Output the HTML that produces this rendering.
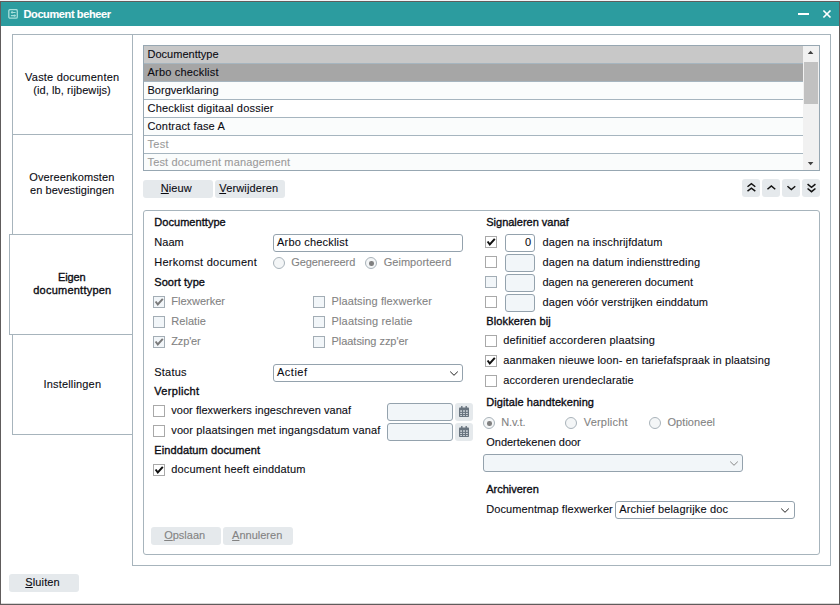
<!DOCTYPE html>
<html lang="nl"><head><meta charset="utf-8"><title>Document beheer</title>
<style>
html,body{margin:0;padding:0;background:#fff}
body{width:840px;height:605px;position:relative;overflow:hidden;font-family:"Liberation Sans",sans-serif;font-size:11px;color:#0b0b12}
body>*{position:absolute}
.win{box-sizing:border-box;border:1px solid #605c5c;border-top:none;background:#fff;box-shadow:inset 0 1px 0 #f4f4f6, inset 0 2px 0 #605c5c, inset 0 -1px 0 #d8d6d6}
.title{background:#2c9c9f;box-shadow:inset 0 1px 0 #29a2a3}
.t{line-height:14px;white-space:pre;font-size:11px;-webkit-text-stroke:0.1px currentColor}
.b{font-weight:normal;-webkit-text-stroke:0.34px currentColor}
.bb{font-weight:bold}
.w{color:#fff}
.g{color:#838383}
.g2{color:#9a9a9a}
u{text-decoration:underline;text-underline-offset:1px}
.btn{background:#e5e9ec;border-radius:3px}
.inp{box-sizing:border-box;border:1px solid #94a2ad;border-radius:3px;background:#fff}
.inp.dis{background:#f2f6f9}
.cb{box-sizing:border-box;border:1px solid #a9a9a9;background:#fff}
.cb.dis{background:#f2f6f9;border-color:#a3adb5}
.cb svg{position:absolute;left:-1px;top:-1px}
.rd{box-sizing:border-box;border:1px solid #a9b3ba;border-radius:50%;background:#f4f6f7}
.rd i{position:absolute;left:2.5px;top:2.5px;width:5px;height:5px;border-radius:45%;background:#808080}
</style></head>
<body>
<div class="win" style="left:0px;top:0px;width:840px;height:605px;"></div>
<div class="abs" style="left:0px;top:0px;width:840px;height:1px;background:#f4f4f6"></div>
<div class="title" style="left:1px;top:2px;width:838px;height:24px;"></div>
<svg class="abs" style="left:8px;top:9px" width="10" height="10" viewBox="0 0 10 10"><rect x="0.8" y="0.6" width="8.5" height="8.6" rx="1.3" fill="none" stroke="#a6dfdb" stroke-width="1.3"/><path d="M2.9 3.4 H7.6 M2.9 6.6 H7.6" stroke="#a6dfdb" stroke-width="1.05"/><circle cx="4.1" cy="3.4" r="1.15" fill="#a6dfdb"/><circle cx="6.6" cy="6.6" r="1.15" fill="#a6dfdb"/></svg>
<span id="t0" class="t bb w" style="left:23.5px;top:7px;letter-spacing:-0.387px;">Document beheer</span>
<div class="abs" style="left:798px;top:13px;width:10.5px;height:2px;background:#fff"></div>
<svg class="abs" style="left:822px;top:9px" width="10" height="10" viewBox="0 0 10 10"><path d="M1.4 1.5 L8.5 8.5 M8.5 1.5 L1.4 8.5" stroke="#fff" stroke-width="1.7" fill="none"/></svg>
<div class="abs" style="left:12px;top:34px;width:121px;height:401px;border:1px solid #a7b4bc;box-sizing:border-box"></div>
<div class="abs" style="left:12px;top:134px;width:121px;height:1px;background:#a7b4bc"></div>
<div class="abs" style="left:12px;top:334px;width:121px;height:1px;background:#a7b4bc"></div>
<div class="abs" style="left:132px;top:34px;width:699px;height:532px;border:1px solid #a7b4bc;box-sizing:border-box"></div>
<div class="abs" style="left:9px;top:234px;width:124px;height:101px;border:1px solid #a7b4bc;box-sizing:border-box;background:#fff"></div>
<span id="t1" class="t " style="left:25.099999999999994px;top:70px;letter-spacing:0.205px;">Vaste documenten</span>
<span id="t2" class="t " style="left:33.25px;top:83px;letter-spacing:0.094px;">(id, lb, rijbewijs)</span>
<span id="t3" class="t " style="left:29.25px;top:170px;letter-spacing:0.095px;">Overeenkomsten</span>
<span id="t4" class="t " style="left:29.974999999999994px;top:183px;letter-spacing:0.071px;">en bevestigingen</span>
<span id="t5" class="t b" style="left:58.0px;top:270px;letter-spacing:-0.160px;">Eigen</span>
<span id="t6" class="t b" style="left:33.25px;top:283px;letter-spacing:0.231px;">documenttypen</span>
<span id="t7" class="t " style="left:43.5px;top:377px;letter-spacing:0.168px;">Instellingen</span>
<div class="abs" style="left:143px;top:45px;width:677px;height:126px;border:1px solid #97a7b2;box-sizing:border-box;background:#fff"></div>
<div class="abs" style="left:144px;top:46px;width:659px;height:17px;background:#c8c8c8"></div>
<div class="abs" style="left:144px;top:63px;width:659px;height:1px;background:#a6b5bf"></div>
<span id="t8" class="t " style="left:147.5px;top:47px;letter-spacing:0.007px;">Documenttype</span>
<div class="abs" style="left:144px;top:64px;width:659px;height:17px;background:#a6a6a6"></div>
<div class="abs" style="left:144px;top:81px;width:659px;height:1px;background:#a6b5bf"></div>
<span id="t9" class="t " style="left:147.5px;top:65px;letter-spacing:0.194px;">Arbo checklist</span>
<div class="abs" style="left:144px;top:82px;width:659px;height:17px;background:#fafcfc"></div>
<div class="abs" style="left:144px;top:99px;width:659px;height:1px;background:#a6b5bf"></div>
<span id="t10" class="t " style="left:147.5px;top:83px;letter-spacing:0.013px;">Borgverklaring</span>
<div class="abs" style="left:144px;top:100px;width:659px;height:17px;background:#fff"></div>
<div class="abs" style="left:144px;top:117px;width:659px;height:1px;background:#a6b5bf"></div>
<span id="t11" class="t " style="left:147.5px;top:101px;letter-spacing:0.198px;">Checklist digitaal dossier</span>
<div class="abs" style="left:144px;top:118px;width:659px;height:17px;background:#fafcfc"></div>
<div class="abs" style="left:144px;top:135px;width:659px;height:1px;background:#a6b5bf"></div>
<span id="t12" class="t " style="left:147.5px;top:119px;letter-spacing:0.149px;">Contract fase A</span>
<div class="abs" style="left:144px;top:136px;width:659px;height:17px;background:#fff"></div>
<div class="abs" style="left:144px;top:153px;width:659px;height:1px;background:#a6b5bf"></div>
<span id="t13" class="t g2" style="left:147.5px;top:137px;letter-spacing:0.270px;">Test</span>
<div class="abs" style="left:144px;top:154px;width:659px;height:16px;background:#fafcfc"></div>
<span id="t14" class="t g2" style="left:147.5px;top:155px;letter-spacing:0.161px;">Test document management</span>
<div class="abs" style="left:803px;top:46px;width:16px;height:124px;background:#f1f1f1"></div>
<div class="abs" style="left:804px;top:62px;width:14px;height:42px;background:#c1c1c1"></div>
<svg class="abs" style="left:807px;top:50px" width="8" height="5" viewBox="0 0 8 5"><path d="M0.8 4.1 L3.6 0.7 L6.4 4.1 Z" fill="#404040"/></svg>
<svg class="abs" style="left:807px;top:161px" width="8" height="5" viewBox="0 0 8 5"><path d="M0.8 0.9 L3.6 4.3 L6.4 0.9 Z" fill="#404040"/></svg>
<div class="btn" style="left:143px;top:180px;width:70px;height:18px;"></div>
<span id="t15" class="t " style="left:160.75px;top:181px;letter-spacing:0.103px;"><u>N</u>ieuw</span>
<div class="btn" style="left:215px;top:180px;width:70px;height:18px;"></div>
<span id="t16" class="t " style="left:219.25px;top:181px;letter-spacing:0.150px;"><u>V</u>erwijderen</span>
<div class="btn" style="left:742px;top:179px;width:18px;height:18px;"><svg width="18" height="18" viewBox="0 0 18 18" style="position:absolute;left:0;top:0" fill="none" stroke="#111" stroke-width="1.5"><path d="M5.5 7.75 L9.4 4.75 L13.3 7.75 M5.5 12.1 L9.4 9.1 L13.3 12.1"/></svg></div>
<div class="btn" style="left:762px;top:179px;width:18px;height:18px;"><svg width="18" height="18" viewBox="0 0 18 18" style="position:absolute;left:0;top:0" fill="none" stroke="#111" stroke-width="1.5"><path d="M5.45 10.3 L9.35 6.9 L13.25 10.3"/></svg></div>
<div class="btn" style="left:782px;top:179px;width:18px;height:18px;"><svg width="18" height="18" viewBox="0 0 18 18" style="position:absolute;left:0;top:0" fill="none" stroke="#111" stroke-width="1.5"><path d="M5.45 7.2 L9.35 10.5 L13.25 7.2"/></svg></div>
<div class="btn" style="left:802px;top:179px;width:18px;height:18px;"><svg width="18" height="18" viewBox="0 0 18 18" style="position:absolute;left:0;top:0" fill="none" stroke="#111" stroke-width="1.5"><path d="M5.55 5.2 L9.5 8.4 L13.45 5.2 M5.55 9.5 L9.5 12.7 L13.45 9.5"/></svg></div>
<div class="abs" style="left:143px;top:210px;width:677px;height:345px;border:1px solid #a7b4bc;border-radius:3px;box-sizing:border-box"></div>
<span id="t17" class="t b" style="left:154.25px;top:215px;letter-spacing:0.051px;">Documenttype</span>
<span id="t18" class="t " style="left:154.25px;top:235px;letter-spacing:0.050px;">Naam</span>
<div class="inp" style="left:273px;top:234px;width:190px;height:18px;"></div>
<span id="t19" class="t " style="left:277px;top:235px;letter-spacing:0.194px;">Arbo checklist</span>
<span id="t20" class="t " style="left:154.25px;top:255px;letter-spacing:0.254px;">Herkomst document</span>
<div class="rd" style="left:273px;top:257px;width:12px;height:12px;"></div>
<span id="t21" class="t g" style="left:291.25px;top:255px;letter-spacing:-0.083px;">Gegenereerd</span>
<div class="rd" style="left:365px;top:257px;width:12px;height:12px;"><i></i></div>
<span id="t22" class="t g" style="left:383.75px;top:255px;letter-spacing:0.023px;">Geimporteerd</span>
<span id="t23" class="t b" style="left:154.25px;top:275px;letter-spacing:0.066px;">Soort type</span>
<div class="cb dis" style="left:153px;top:296px;width:12px;height:12px;"><svg viewBox="0 0 12 12" width="12" height="12"><path d="M2.6 5.5 L4.8 8.5 L9.8 2.9" fill="none" stroke="#7a7a7a" stroke-width="2"/></svg></div>
<span id="t24" class="t g" style="left:171.25px;top:294px;letter-spacing:-0.006px;">Flexwerker</span>
<div class="cb dis" style="left:313px;top:296px;width:12px;height:12px;"></div>
<span id="t25" class="t g" style="left:331.5px;top:294px;letter-spacing:0.108px;">Plaatsing flexwerker</span>
<div class="cb dis" style="left:153px;top:316px;width:12px;height:12px;"></div>
<span id="t26" class="t g" style="left:171.25px;top:314px;letter-spacing:0.043px;">Relatie</span>
<div class="cb dis" style="left:313px;top:316px;width:12px;height:12px;"></div>
<span id="t27" class="t g" style="left:331.5px;top:314px;letter-spacing:0.170px;">Plaatsing relatie</span>
<div class="cb dis" style="left:153px;top:336px;width:12px;height:12px;"><svg viewBox="0 0 12 12" width="12" height="12"><path d="M2.6 5.5 L4.8 8.5 L9.8 2.9" fill="none" stroke="#7a7a7a" stroke-width="2"/></svg></div>
<span id="t28" class="t g" style="left:171.25px;top:334px;letter-spacing:-0.146px;">Zzp'er</span>
<div class="cb dis" style="left:313px;top:336px;width:12px;height:12px;"></div>
<span id="t29" class="t g" style="left:331.5px;top:334px;letter-spacing:-0.037px;">Plaatsing zzp'er</span>
<span id="t30" class="t " style="left:154.25px;top:365px;letter-spacing:0.211px;">Status</span>
<div class="inp" style="left:273px;top:364px;width:190px;height:18px;"></div>
<span id="t31" class="t " style="left:277px;top:365px;letter-spacing:0.495px;">Actief</span>
<svg class="abs" style="left:449px;top:370px" width="10" height="7" viewBox="0 0 10 7"><path d="M1.2 1.6 L5 5.3 L8.8 1.6" fill="none" stroke="#222" stroke-width="1"/></svg>
<span id="t32" class="t b" style="left:154.25px;top:384px;letter-spacing:0.320px;">Verplicht</span>
<div class="cb" style="left:153px;top:405px;width:12px;height:12px;"></div>
<span id="t33" class="t " style="left:171.25px;top:403px;letter-spacing:0.036px;">voor flexwerkers ingeschreven vanaf</span>
<div class="cb" style="left:153px;top:425px;width:12px;height:12px;"></div>
<span id="t34" class="t " style="left:171.25px;top:423px;letter-spacing:0.125px;">voor plaatsingen met ingangsdatum vanaf</span>
<div class="inp dis" style="left:387px;top:403px;width:66px;height:18px;"></div>
<div class="btn" style="left:455px;top:403px;width:18px;height:18px;"></div>
<svg class="abs" style="left:459px;top:406px" width="10" height="11" viewBox="0 0 10 11"><rect x="0" y="1.6" width="10" height="9.4" rx="0.8" fill="#69747f"/><rect x="2.1" y="0" width="1.4" height="3" fill="#69747f"/><rect x="6.5" y="0" width="1.4" height="3" fill="#69747f"/><g fill="#dfe4e8"><rect x="1.3" y="4.3" width="1.6" height="1.5"/><rect x="4.2" y="4.3" width="1.6" height="1.5"/><rect x="7.1" y="4.3" width="1.6" height="1.5"/><rect x="1.3" y="6.9" width="1.6" height="1.1"/><rect x="4.2" y="6.9" width="1.6" height="1.1"/><rect x="7.1" y="6.9" width="1.6" height="1.1"/><rect x="1.3" y="9.1" width="1.6" height="0.9"/><rect x="4.2" y="9.1" width="1.6" height="0.9"/><rect x="7.1" y="9.1" width="1.6" height="0.9"/></g></svg>
<div class="inp dis" style="left:387px;top:423px;width:66px;height:18px;"></div>
<div class="btn" style="left:455px;top:423px;width:18px;height:18px;"></div>
<svg class="abs" style="left:459px;top:426px" width="10" height="11" viewBox="0 0 10 11"><rect x="0" y="1.6" width="10" height="9.4" rx="0.8" fill="#69747f"/><rect x="2.1" y="0" width="1.4" height="3" fill="#69747f"/><rect x="6.5" y="0" width="1.4" height="3" fill="#69747f"/><g fill="#dfe4e8"><rect x="1.3" y="4.3" width="1.6" height="1.5"/><rect x="4.2" y="4.3" width="1.6" height="1.5"/><rect x="7.1" y="4.3" width="1.6" height="1.5"/><rect x="1.3" y="6.9" width="1.6" height="1.1"/><rect x="4.2" y="6.9" width="1.6" height="1.1"/><rect x="7.1" y="6.9" width="1.6" height="1.1"/><rect x="1.3" y="9.1" width="1.6" height="0.9"/><rect x="4.2" y="9.1" width="1.6" height="0.9"/><rect x="7.1" y="9.1" width="1.6" height="0.9"/></g></svg>
<span id="t35" class="t b" style="left:154.25px;top:443px;letter-spacing:0.106px;">Einddatum document</span>
<div class="cb" style="left:153px;top:464px;width:12px;height:12px;"><svg viewBox="0 0 12 12" width="12" height="12"><path d="M2.6 5.5 L4.8 8.5 L9.8 2.9" fill="none" stroke="#111" stroke-width="2"/></svg></div>
<span id="t36" class="t " style="left:171.25px;top:462px;letter-spacing:0.174px;">document heeft einddatum</span>
<div class="btn" style="left:151px;top:527px;width:70px;height:18px;"></div>
<span id="t37" class="t g" style="left:164.2px;top:528px;letter-spacing:0.002px;"><u>O</u>pslaan</span>
<div class="btn" style="left:223px;top:527px;width:70px;height:18px;"></div>
<span id="t38" class="t g" style="left:232.1px;top:528px;letter-spacing:0.004px;"><u>A</u>nnuleren</span>
<span id="t39" class="t b" style="left:486.25px;top:215px;letter-spacing:-0.004px;">Signaleren vanaf</span>
<div class="cb" style="left:485px;top:236px;width:12px;height:12px;"><svg viewBox="0 0 12 12" width="12" height="12"><path d="M2.6 5.5 L4.8 8.5 L9.8 2.9" fill="none" stroke="#111" stroke-width="2"/></svg></div>
<div class="inp" style="left:505px;top:234px;width:30px;height:18px;"></div>
<span id="t40" class="t " style="left:542.5px;top:235px;letter-spacing:0.145px;">dagen na inschrijfdatum</span>
<div class="cb" style="left:485px;top:256px;width:12px;height:12px;"></div>
<div class="inp dis" style="left:505px;top:254px;width:30px;height:18px;"></div>
<span id="t41" class="t " style="left:542.5px;top:255px;letter-spacing:0.117px;">dagen na datum indiensttreding</span>
<div class="cb dis" style="left:485px;top:276px;width:12px;height:12px;"></div>
<div class="inp dis" style="left:505px;top:274px;width:30px;height:18px;"></div>
<span id="t42" class="t " style="left:542.5px;top:275px;letter-spacing:0.001px;">dagen na genereren document</span>
<div class="cb" style="left:485px;top:296px;width:12px;height:12px;"></div>
<div class="inp dis" style="left:505px;top:294px;width:30px;height:18px;"></div>
<span id="t43" class="t " style="left:542.5px;top:295px;letter-spacing:0.092px;">dagen vóór verstrijken einddatum</span>
<span id="t44" class="t " style="right:309px;top:235px;letter-spacing:0.000px;">0</span>
<span id="t45" class="t b" style="left:486.25px;top:314px;letter-spacing:0.126px;">Blokkeren bij</span>
<div class="cb" style="left:485px;top:335px;width:12px;height:12px;"></div>
<span id="t46" class="t " style="left:503.25px;top:333px;letter-spacing:0.186px;">definitief accorderen plaatsing</span>
<div class="cb" style="left:485px;top:355px;width:12px;height:12px;"><svg viewBox="0 0 12 12" width="12" height="12"><path d="M2.6 5.5 L4.8 8.5 L9.8 2.9" fill="none" stroke="#111" stroke-width="2"/></svg></div>
<span id="t47" class="t " style="left:503.25px;top:353px;letter-spacing:0.123px;">aanmaken nieuwe loon- en tariefafspraak in plaatsing</span>
<div class="cb" style="left:485px;top:375px;width:12px;height:12px;"></div>
<span id="t48" class="t " style="left:503.25px;top:373px;letter-spacing:0.112px;">accorderen urendeclaratie</span>
<span id="t49" class="t b" style="left:486.25px;top:395px;letter-spacing:0.097px;">Digitale handtekening</span>
<div class="rd" style="left:483px;top:417px;width:12px;height:12px;"><i></i></div>
<span id="t50" class="t g" style="left:501.25px;top:415px;letter-spacing:-0.123px;">N.v.t.</span>
<div class="rd" style="left:565px;top:417px;width:12px;height:12px;"></div>
<span id="t51" class="t g" style="left:583.75px;top:415px;letter-spacing:0.195px;">Verplicht</span>
<div class="rd" style="left:649px;top:417px;width:12px;height:12px;"></div>
<span id="t52" class="t g" style="left:667.5px;top:415px;letter-spacing:0.050px;">Optioneel</span>
<span id="t53" class="t " style="left:486.25px;top:435px;letter-spacing:-0.018px;">Ondertekenen door</span>
<div class="inp dis" style="left:483px;top:454px;width:260px;height:18px;"></div>
<svg class="abs" style="left:729px;top:460px" width="10" height="7" viewBox="0 0 10 7"><path d="M1.2 1.6 L5 5.3 L8.8 1.6" fill="none" stroke="#888" stroke-width="1"/></svg>
<span id="t54" class="t b" style="left:486.25px;top:482px;letter-spacing:-0.009px;">Archiveren</span>
<span id="t55" class="t " style="left:486.25px;top:502px;letter-spacing:0.085px;">Documentmap flexwerker</span>
<div class="inp" style="left:615px;top:501px;width:180px;height:18px;"></div>
<span id="t56" class="t " style="left:619.25px;top:502px;letter-spacing:0.171px;">Archief belagrijke doc</span>
<svg class="abs" style="left:780px;top:507px" width="10" height="7" viewBox="0 0 10 7"><path d="M1.2 1.6 L5 5.3 L8.8 1.6" fill="none" stroke="#222" stroke-width="1"/></svg>
<div class="btn" style="left:9px;top:574px;width:70px;height:18px;"></div>
<span id="t57" class="t " style="left:25.3px;top:575px;letter-spacing:0.125px;"><u>S</u>luiten</span>
</body></html>
